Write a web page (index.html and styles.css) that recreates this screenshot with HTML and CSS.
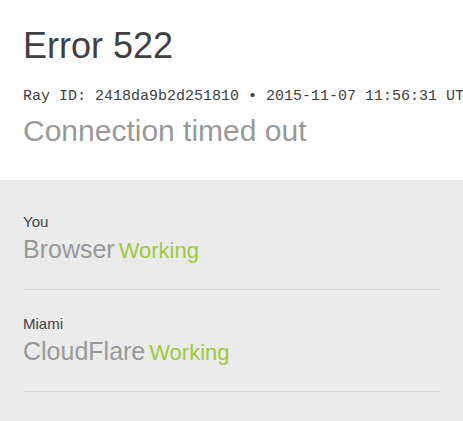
FILE: index.html
```html
<!DOCTYPE html>
<html lang="en">
<head>
<meta charset="utf-8">
<title>Error 522 | Connection timed out</title>
<link rel="stylesheet" href="styles.css">
</head>
<body>
<header class="error-header">
  <h1 class="error-title">Error 522</h1>
  <div class="ray-id">Ray ID: 2418da9b2d251810 &bull; 2015-11-07 11:56:31 UTC</div>
  <h2 class="error-desc">Connection timed out</h2>
</header>
<section class="status-list">
  <div class="status-item">
    <div class="status-place">You</div>
    <div class="status-line"><span class="status-name">Browser</span> <span class="status-label">Working</span></div>
  </div>
  <div class="status-item">
    <div class="status-place">Miami</div>
    <div class="status-line"><span class="status-name">CloudFlare</span> <span class="status-label">Working</span></div>
  </div>
</section>
</body>
</html>
```
FILE: styles.css
```css
html, body {
  margin: 0;
  padding: 0;
}
body {
  background: #ebebeb;
  font-family: "Liberation Sans", Arial, sans-serif;
  color: #404040;
}
.error-header {
  background: #ffffff;
  padding: 24px 23px 31px;
  overflow: hidden;
}
.error-title {
  margin: 0;
  font-size: 36px;
  line-height: 43px;
  font-weight: normal;
  color: #404040;
}
.ray-id {
  margin-top: 20px;
  font-family: "Liberation Mono", "Courier New", monospace;
  font-size: 15px;
  line-height: 20px;
  white-space: nowrap;
  color: #404040;
}
.error-desc {
  margin: 6px 0 0;
  font-size: 30px;
  line-height: 36px;
  font-weight: normal;
  color: #999999;
}
.status-list {
  padding: 8px 23px 0;
}
.status-item {
  padding: 24px 0 25px;
  border-bottom: 1px solid #dadada;
}
.status-place {
  font-size: 15px;
  line-height: 20px;
  margin-bottom: 2px;
  color: #404040;
}
.status-line {
  font-size: 25px;
  line-height: 30px;
  height: 30px;
  white-space: nowrap;
  word-spacing: -3px;
}
.status-name {
  color: #999999;
}
.status-label {
  font-size: 22px;
  line-height: 1;
  color: #9bca3e;
}
```
